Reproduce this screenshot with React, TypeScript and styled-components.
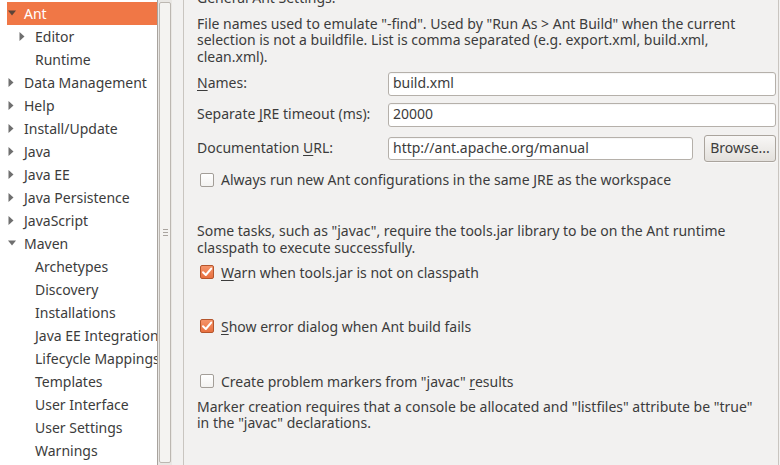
import React from "react";
import styled, { createGlobalStyle, css } from "styled-components";

const Global = createGlobalStyle`
  html, body {
    margin: 0;
    padding: 0;
    width: 780px;
    height: 465px;
    overflow: hidden;
    background: #f2f1f0;
  }
  body {
    font-family: "Noto Sans", "Open Sans", sans-serif;
    font-size: 14px;
    color: #3c3c3c;
  }
`;

const Window = styled.div`
  display: flex;
  width: 780px;
  height: 465px;
  overflow: hidden;
  background: #f2f1f0;
`;

const Tree = styled.div`
  width: 157px;
  flex: none;
  background: #ffffff;
  padding-top: 2px;
  overflow: hidden;
  box-sizing: border-box;
`;

const TreeRow = styled.div<{ $level: number; $selected?: boolean }>`
  display: flex;
  align-items: center;
  height: 23px;
  margin-left: 7px;
  padding-left: ${(p) => p.$level * 11}px;
  padding-bottom: 1px;
  box-sizing: border-box;
  white-space: nowrap;
  color: #3c3c3c;
  ${(p) =>
    p.$selected &&
    css`
      background: #f07746;
      color: #ffffff;
    `}
`;

const Expander = styled.span`
  width: 17px;
  flex: none;
  display: flex;
  align-items: center;
  padding-left: 1px;
  box-sizing: border-box;
`;

const ScrollBar = styled.div`
  width: 15px;
  flex: none;
  border-left: 1px solid #a8a39e;
  background: #e9e7e4;
  box-sizing: border-box;
  display: flex;
  padding: 2px 1px;
`;

const Thumb = styled.div`
  flex: 1;
  border: 1px solid #bcb7b1;
  border-radius: 2px;
  background: #f4f3f1;
  display: flex;
  align-items: center;
  justify-content: center;
`;

const Grip = styled.div`
  width: 5px;
  height: 7px;
  background: repeating-linear-gradient(
    to bottom,
    #a9a49f 0,
    #a9a49f 1px,
    transparent 1px,
    transparent 3px
  );
`;

const Sash = styled.div`
  width: 11px;
  flex: none;
`;

const Panel = styled.div`
  flex: none;
  width: 596px;
  height: 465px;
  border-left: 1px solid #c9c5c0;
  border-right: 1px solid #c9c5c0;
  box-sizing: border-box;
  padding: 0 2px 0 13px;
  display: flex;
  flex-direction: column;
  overflow: hidden;
`;

const Text = styled.div<{ $top: number }>`
  margin-top: ${(p) => p.$top}px;
  line-height: 16.6px;
  white-space: nowrap;
  flex: none;
`;

const FormRow = styled.div<{ $top: number; $height: number }>`
  display: flex;
  align-items: center;
  margin-top: ${(p) => p.$top}px;
  height: ${(p) => p.$height}px;
  flex: none;
`;

const Label = styled.div`
  width: 191px;
  flex: none;
  line-height: 17px;
  padding-bottom: 3px;
  white-space: nowrap;
`;

const Field = styled.div<{ $height: number }>`
  flex: 1;
  height: ${(p) => p.$height}px;
  box-sizing: border-box;
  border: 1px solid #b5b0aa;
  border-radius: 3px;
  background: #ffffff;
  padding: 0 4px 3px;
  display: flex;
  align-items: center;
  line-height: 17px;
  white-space: nowrap;
  box-shadow: inset 0 1px 1px rgba(0, 0, 0, 0.04);
`;

const Button = styled.div`
  width: 72px;
  height: 27px;
  margin-left: 11px;
  flex: none;
  box-sizing: border-box;
  border: 1px solid #aaa49d;
  border-radius: 3px;
  background: linear-gradient(to bottom, #f8f7f6, #e3e0dc);
  display: flex;
  align-items: center;
  justify-content: center;
  padding-bottom: 2px;
  line-height: 17px;
  box-shadow: 0 1px 0 rgba(255, 255, 255, 0.6);
`;

const CheckRow = styled.div<{ $top: number }>`
  display: flex;
  align-items: center;
  margin-top: ${(p) => p.$top}px;
  padding-left: 3px;
  line-height: 17px;
  white-space: nowrap;
  flex: none;
`;

const Box = styled.span<{ $checked?: boolean }>`
  width: 14px;
  height: 14px;
  flex: none;
  box-sizing: border-box;
  margin-right: 7px;
  border-radius: 2px;
  display: flex;
  align-items: center;
  justify-content: center;
  ${(p) =>
    p.$checked
      ? css`
          border: 1px solid #b4552c;
          background: linear-gradient(to bottom, #f5946a, #e8703f);
        `
      : css`
          border: 1px solid #a39e98;
          background: linear-gradient(to bottom, #ffffff, #f3f2f0);
        `}
`;

const U = styled.span`
  text-decoration: underline;
  text-underline-offset: 2px;
`;

const Arrow = ({ open, dark }: { open: boolean; dark?: boolean }) =>
  open ? (
    <svg width="8" height="6" viewBox="0 0 8 6">
      <path d="M0 0.5 L8 0.5 L4 5.5 Z" fill={dark ? "#5c4438" : "#6f6f6f"} />
    </svg>
  ) : (
    <svg width="6" height="9" viewBox="0 0 6 9">
      <path d="M0.5 0 L5.5 4.5 L0.5 9 Z" fill="#6f6f6f" />
    </svg>
  );

const Check = () => (
  <svg width="12" height="12" viewBox="0 0 12 12">
    <path
      d="M2 6.2 L4.8 9 L10.2 2.6"
      fill="none"
      stroke="#ffffff"
      strokeWidth="2"
      strokeLinecap="round"
      strokeLinejoin="round"
    />
  </svg>
);

type Node = { label: string; level: number; arrow?: "open" | "closed"; selected?: boolean };

const nodes: Node[] = [
  { label: "Ant", level: 0, arrow: "open", selected: true },
  { label: "Editor", level: 1, arrow: "closed" },
  { label: "Runtime", level: 1 },
  { label: "Data Management", level: 0, arrow: "closed" },
  { label: "Help", level: 0, arrow: "closed" },
  { label: "Install/Update", level: 0, arrow: "closed" },
  { label: "Java", level: 0, arrow: "closed" },
  { label: "Java EE", level: 0, arrow: "closed" },
  { label: "Java Persistence", level: 0, arrow: "closed" },
  { label: "JavaScript", level: 0, arrow: "closed" },
  { label: "Maven", level: 0, arrow: "open" },
  { label: "Archetypes", level: 1 },
  { label: "Discovery", level: 1 },
  { label: "Installations", level: 1 },
  { label: "Java EE Integration", level: 1 },
  { label: "Lifecycle Mappings", level: 1 },
  { label: "Templates", level: 1 },
  { label: "User Interface", level: 1 },
  { label: "User Settings", level: 1 },
  { label: "Warnings", level: 1 },
];

export default function App() {
  return (
    <>
      <Global />
      <Window>
        <Tree>
          {nodes.map((n) => (
            <TreeRow key={n.label} $level={n.level} $selected={n.selected}>
              <Expander>{n.arrow && <Arrow open={n.arrow === "open"} dark={n.selected} />}</Expander>
              {n.label}
            </TreeRow>
          ))}
        </Tree>
        <ScrollBar>
          <Thumb>
            <Grip />
          </Thumb>
        </ScrollBar>
        <Sash />
        <Panel>
          <Text $top={-10}>General Ant Settings:</Text>
          <Text $top={9}>
            File names used to emulate "-find". Used by "Run As &gt; Ant Build" when the current
            <br />
            selection is not a buildfile. List is comma separated (e.g. export.xml, build.xml,
            <br />
            clean.xml).
          </Text>
          <FormRow $top={7} $height={24}>
            <Label>
              <U>N</U>ames:
            </Label>
            <Field $height={24}>build.xml</Field>
          </FormRow>
          <FormRow $top={7} $height={24}>
            <Label>
              Separate <U>J</U>RE timeout (ms):
            </Label>
            <Field $height={24}>20000</Field>
          </FormRow>
          <FormRow $top={8} $height={27}>
            <Label>
              Documentation <U>U</U>RL:
            </Label>
            <Field $height={23}>http://ant.apache.org/manual</Field>
            <Button>Browse...</Button>
          </FormRow>
          <CheckRow $top={9}>
            <Box />
            Always run new Ant configurations in the same JRE as the workspace
          </CheckRow>
          <Text $top={35}>
            Some tasks, such as "javac", require the tools.jar library to be on the Ant runtime
            <br />
            classpath to execute successfully.
          </Text>
          <CheckRow $top={7}>
            <Box $checked>
              <Check />
            </Box>
            <span>
              <U>W</U>arn when tools.jar is not on classpath
            </span>
          </CheckRow>
          <CheckRow $top={37}>
            <Box $checked>
              <Check />
            </Box>
            <span>
              <U>S</U>how error dialog when Ant build fails
            </span>
          </CheckRow>
          <CheckRow $top={38}>
            <Box />
            <span>
              Create problem markers from "javac" <U>r</U>esults
            </span>
          </CheckRow>
          <Text $top={9}>
            Marker creation requires that a console be allocated and "listfiles" attribute be "true"
            <br />
            in the "javac" declarations.
          </Text>
          <Text $top={31}>Ant Color Options:</Text>
        </Panel>
      </Window>
    </>
  );
}
